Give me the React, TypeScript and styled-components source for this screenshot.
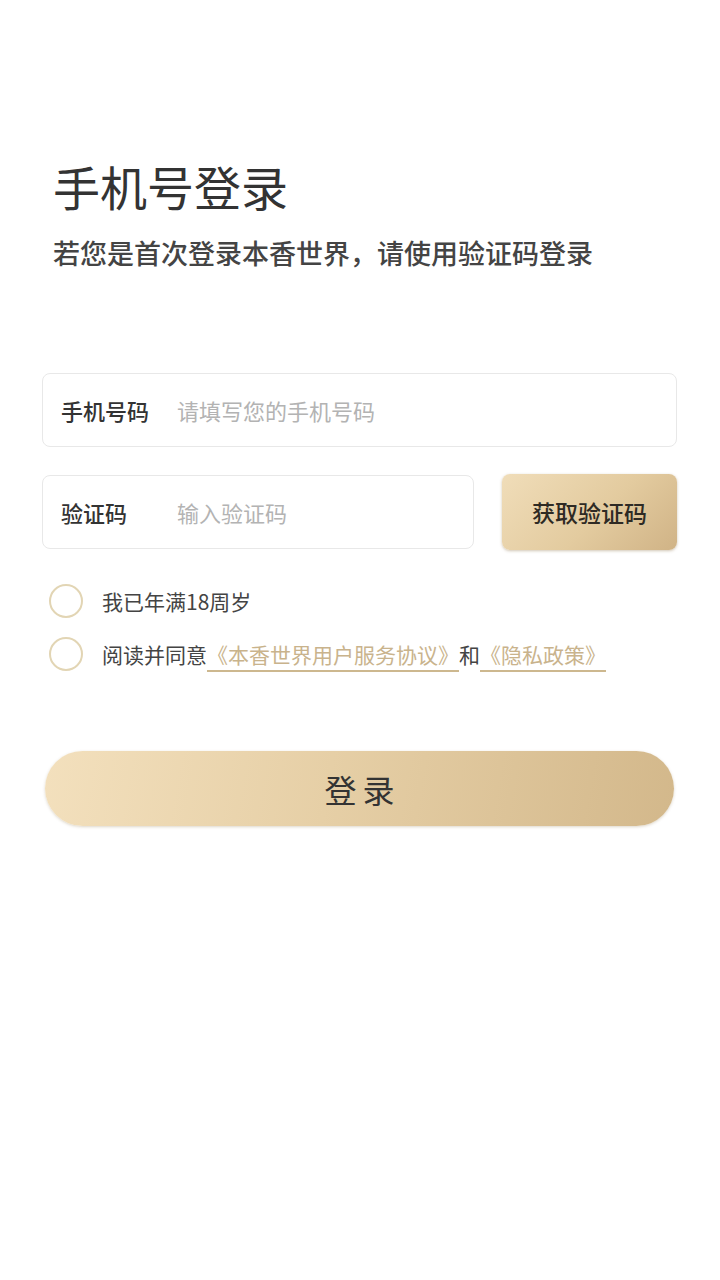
import React from "react";
import styled, { createGlobalStyle } from "styled-components";

const Global = createGlobalStyle`
  html, body { margin: 0; padding: 0; background: #fff; }
  body { font-family: "Noto Sans CJK SC", "Noto Sans", sans-serif; }
  * { box-sizing: border-box; }
`;

const Page = styled.div`
  width: 720px;
  min-height: 1280px;
  background: #fff;
  padding: 154px 43px 0 42px;
  display: flex;
  flex-direction: column;
`;

const Header = styled.div`
  padding-left: 11px;
  display: flex;
  flex-direction: column;
`;

const Title = styled.h1`
  margin: 0;
  font-size: 47px;
  line-height: 64px;
  font-weight: 400;
  color: #333;
`;

const Subtitle = styled.p`
  margin: 17px 0 0;
  font-size: 27px;
  line-height: 36px;
  font-weight: 500;
  color: #444;
`;

const Form = styled.div`
  margin-top: 102px;
  display: flex;
  flex-direction: column;
`;

const Field = styled.div<{ $width?: string }>`
  display: flex;
  align-items: center;
  height: 74px;
  width: ${(p) => p.$width || "100%"};
  border: 1px solid #e8e8e8;
  border-radius: 8px;
  padding-left: 18px;
  background: #fff;
`;

const Label = styled.span`
  width: 116px;
  flex-shrink: 0;
  font-size: 22px;
  font-weight: 500;
  color: #333;
`;

const Placeholder = styled.span`
  font-size: 22px;
  color: #b3b3b3;
`;

const CodeRow = styled.div`
  margin-top: 27px;
  display: flex;
  align-items: center;
  justify-content: space-between;
`;

const CodeButton = styled.button`
  width: 175px;
  height: 76px;
  border: none;
  border-radius: 8px;
  background: linear-gradient(135deg, #f0ddb9 0%, #e3cb9f 55%, #d0b386 100%);
  box-shadow: 0 1px 3px rgba(120, 90, 40, 0.35);
  font-family: inherit;
  font-size: 23px;
  font-weight: 500;
  color: #2e2a24;
  padding: 0;
`;

const Checks = styled.div`
  margin-top: 33px;
  display: flex;
  flex-direction: column;
  gap: 18px;
  padding-left: 7px;
`;

const CheckRow = styled.div`
  display: flex;
  align-items: center;
  gap: 19px;
  height: 35px;
`;

const Circle = styled.span`
  width: 34px;
  height: 34px;
  border-radius: 50%;
  border: 2px solid #e2d5b4;
  flex-shrink: 0;
`;

const CheckText = styled.span`
  font-size: 21px;
  color: #444;
  white-space: nowrap;
`;

const Link = styled.span`
  color: #c9b38c;
  border-bottom: 2px solid #cdb88f;
  padding-bottom: 1px;
`;

const LoginButton = styled.button`
  margin-top: 80px;
  margin-left: 3px;
  width: 629px;
  height: 75px;
  border: none;
  border-radius: 38px;
  background: linear-gradient(100deg, #f3e0bd 0%, #e6cfa6 45%, #d3b88b 100%);
  box-shadow: 0 1px 3px rgba(120, 90, 40, 0.25);
  font-family: inherit;
  font-size: 32px;
  letter-spacing: 6px;
  color: #333;
  padding: 0 0 0 6px;
`;

export default function App() {
  return (
    <>
      <Global />
      <Page>
        <Header>
          <Title>手机号登录</Title>
          <Subtitle>若您是首次登录本香世界，请使用验证码登录</Subtitle>
        </Header>
        <Form>
          <Field>
            <Label>手机号码</Label>
            <Placeholder>请填写您的手机号码</Placeholder>
          </Field>
          <CodeRow>
            <Field $width="432px">
              <Label>验证码</Label>
              <Placeholder>输入验证码</Placeholder>
            </Field>
            <CodeButton>获取验证码</CodeButton>
          </CodeRow>
          <Checks>
            <CheckRow>
              <Circle />
              <CheckText>我已年满18周岁</CheckText>
            </CheckRow>
            <CheckRow>
              <Circle />
              <CheckText>
                阅读并同意<Link>《本香世界用户服务协议》</Link>和<Link>《隐私政策》</Link>
              </CheckText>
            </CheckRow>
          </Checks>
          <LoginButton>登录</LoginButton>
        </Form>
      </Page>
    </>
  );
}
